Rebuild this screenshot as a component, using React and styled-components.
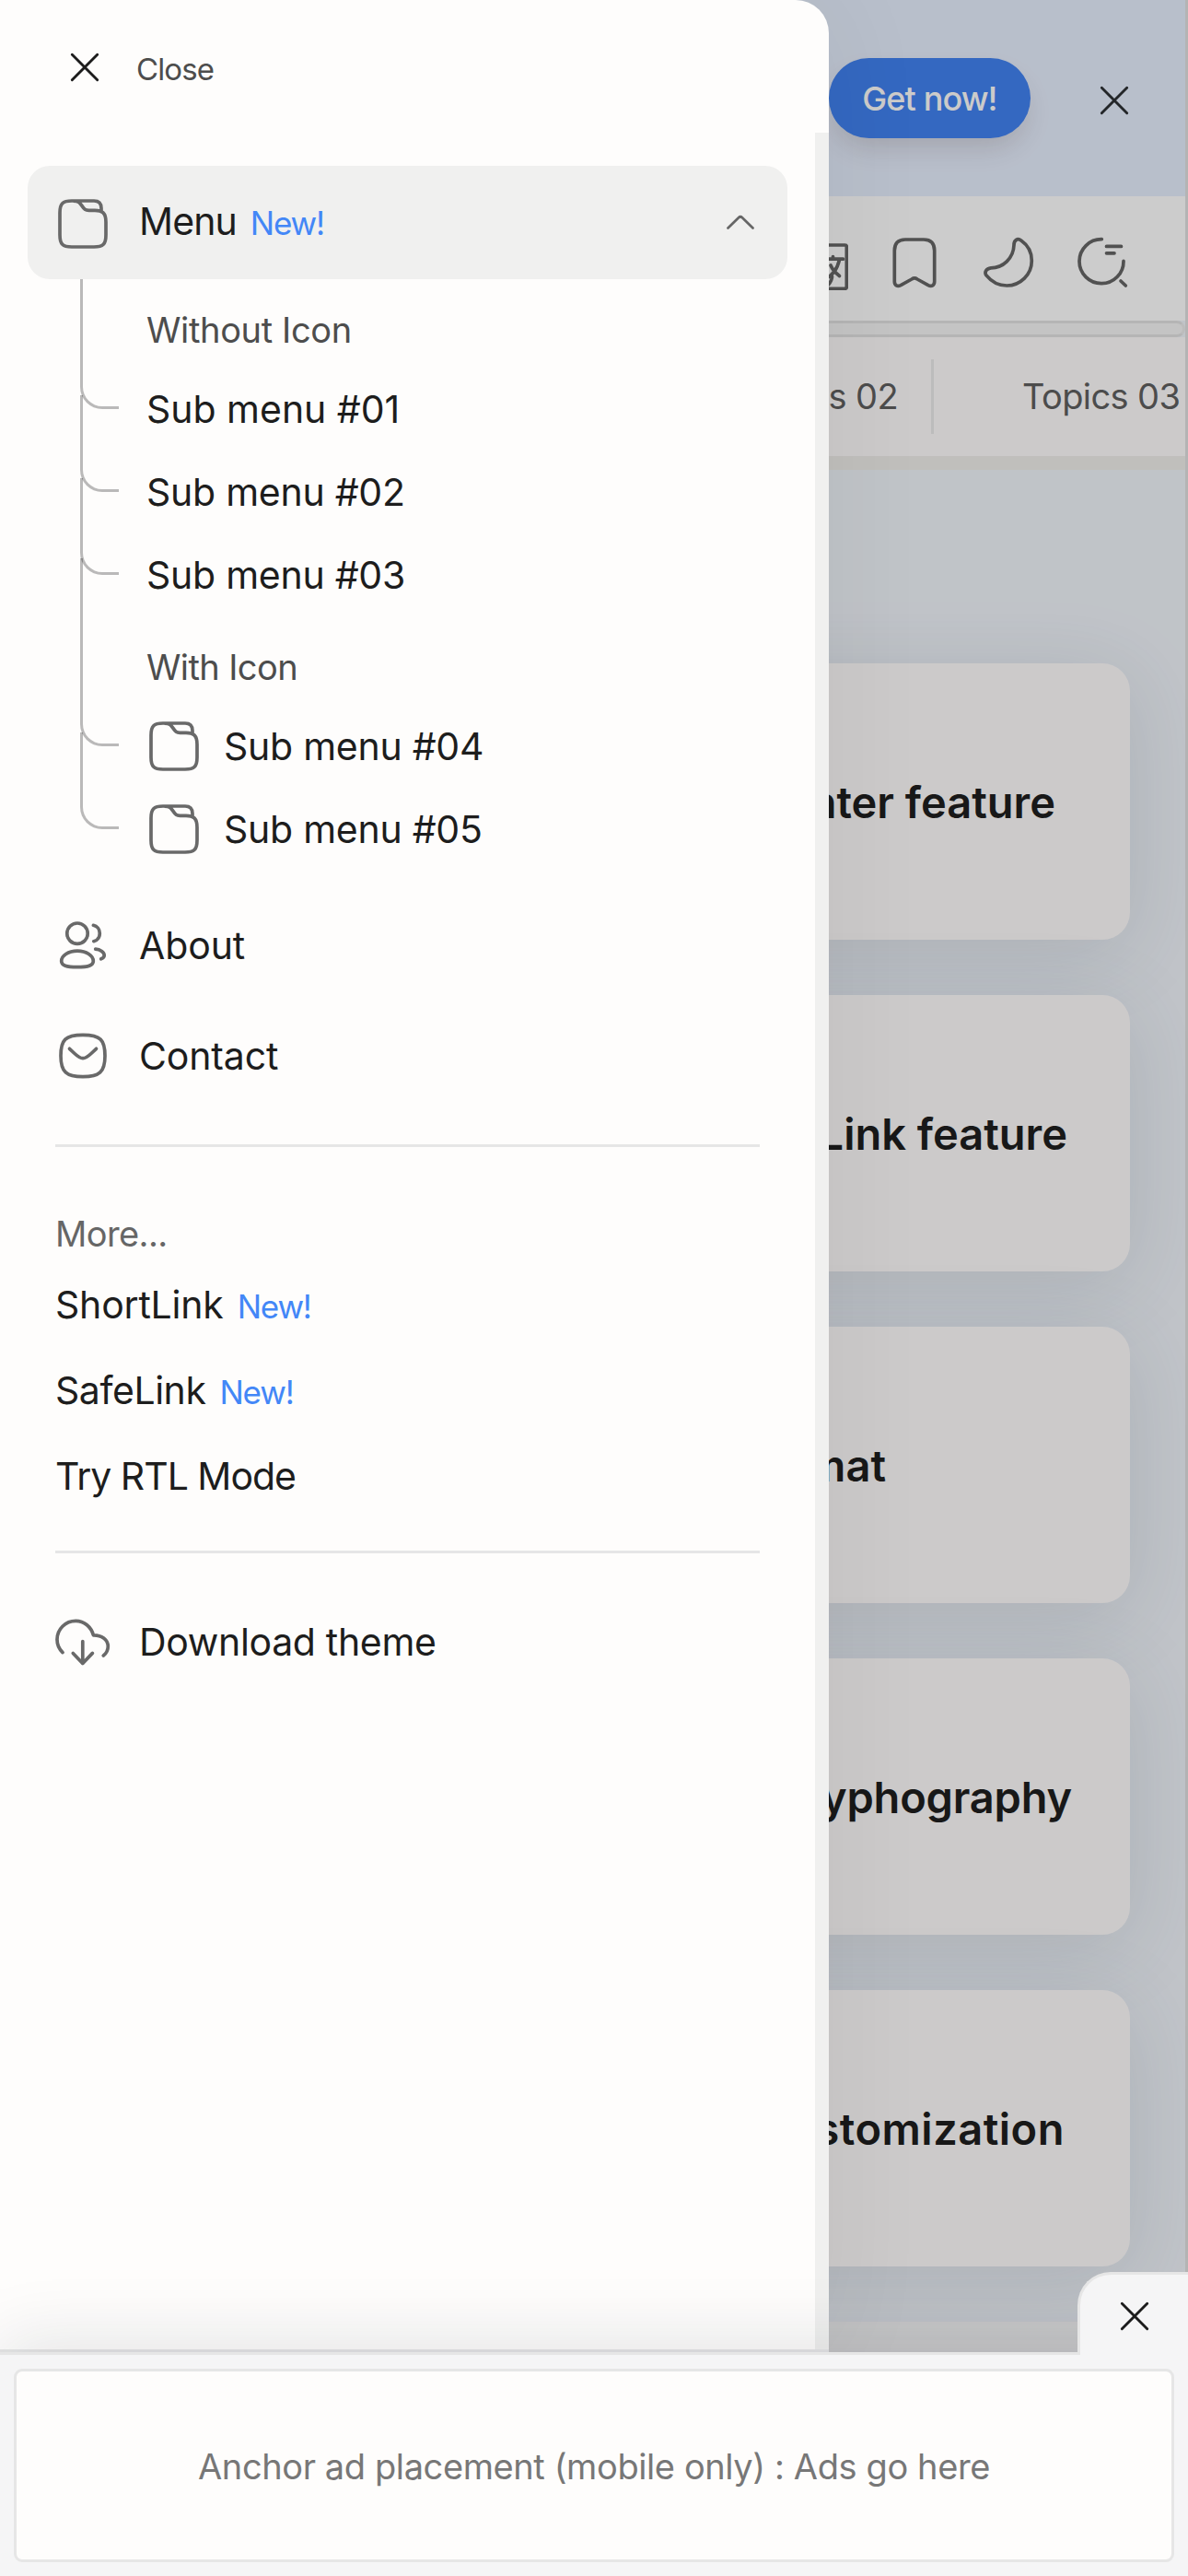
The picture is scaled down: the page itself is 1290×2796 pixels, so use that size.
import React from "react";
import styled, { createGlobalStyle, css } from "styled-components";

const GlobalStyle = createGlobalStyle`
  *, *::before { box-sizing: border-box; }
  body {
    margin: 0;
    font-family: "Inter", "Open Sans", sans-serif;
    color: #1d1d1d;
  }
  ul { list-style: none; margin: 0; padding: 0; }
  button { font: inherit; border: 0; padding: 0; background: none; color: inherit; }
`;

/* ---------- icons ---------- */

const Svg = styled.svg`
  display: block;
  flex: none;
  width: 60px;
  height: 60px;
  fill: none;
  stroke: ${(p) => p.$color || "#696969"};
  stroke-width: ${(p) => p.$weight || 3.7};
  stroke-linecap: round;
  stroke-linejoin: round;
`;

const Icon = ({ color, weight, children }) => (
  <Svg viewBox="0 0 60 60" $color={color} $weight={weight}>
    {children}
  </Svg>
);

const CloseIcon = ({ color = "#1c1c1c" }) => (
  <Icon color={color} weight={2.9}>
    <path d="M16.3 16.3L43.7 43.7M43.7 16.3L16.3 43.7" />
  </Icon>
);

const FolderIcon = () => (
  <Icon>
    <path d="M50 15.3V13C50 7.5 47.5 5 42 5H18C8 5 5 8 5 18V42C5 52 8 55 18 55H42C52 55 55 52 55 42V28C55 18 51 15.3 43 15.3H36.500C32.500 15.3 31.500 14 29.500 11.200C26.800 7.300 26 5.200 20 5.100" />
  </Icon>
);

const UsersIcon = () => (
  <Icon>
    <circle cx="24" cy="14.200" r="11.200" />
    <path d="M24 33.200C34 33.200 41.300 38.500 41.300 44.200C41.300 49 36 50.600 24 50.600C12 50.600 6.700 49 6.700 44.200C6.700 38.500 14 33.200 24 33.200Z" />
    <path d="M41.400 5.300C45.500 6.200 48.300 9.800 48.300 14C48.300 18.200 45.700 21.800 41.800 22.700" />
    <path d="M43.700 31.200C49 31.500 53.200 34.500 53.200 37.900C53.200 39.700 51.700 41 49.700 41.800" />
  </Icon>
);

const MailIcon = () => (
  <Icon>
    <path d="M30 4.300C49 4.300 54 9.500 54 27C54 44.500 48 49.700 30 49.700C12 49.700 6 44.500 6 27C6 9.500 11 4.300 30 4.300Z" />
    <path d="M15.500 19.300L21 24.500C25.500 28.700 27.500 29.700 30 29.700C32.500 29.700 34.500 28.700 39 24.500L44.500 19.300" />
  </Icon>
);

const CloudIcon = () => (
  <Icon>
    <path d="M8 38.600C4.200 35 2 30 2 24.600C2 13.300 11 4.400 22.300 4.400C31.500 4.400 39 11 41.400 19.800C50 19.600 57.300 24.500 57.300 32.100C57.300 36.200 55.500 39.600 52.300 42" />
    <path d="M29.800 26.500V50.500M19.300 39.400L29.800 50.500L40.400 39.400" />
  </Icon>
);

const BookmarkIcon = () => (
  <Icon color="#666">
    <path d="M8.300 17C8.300 9 12 5 20 5H40C48 5 51.700 9 51.700 17V50.500C51.700 54.800 48.500 56.400 45 54.600L33 48C31 46.600 29 46.600 27 48L15 54.600C11.500 56.400 8.300 54.800 8.300 50.500Z" />
  </Icon>
);

const MoonIcon = () => (
  <Icon color="#666">
    <path d="M36 11C36 5.300 40 3.200 43.800 6C51 11 55.300 19 55.300 28C55.300 43 43 55 28.300 55C18.500 55 11.500 50.500 6 43.800C3.500 40.500 6 36.300 11 35.800C24 35.800 35.500 25.500 36 11Z" />
  </Icon>
);

const SearchIcon = () => (
  <Icon color="#666">
    <path d="M29.300 4.700A24 24 0 1 0 53 28.400" />
    <path d="M50 50L55.300 55M34.500 12.400H50.500M34.500 19.800H43" />
  </Icon>
);

const TranslateIcon = () => (
  <Icon color="#666">
    <path d="M22 11H56.500Q58.300 11 58.300 13V56.300Q58.300 58.300 56.300 58.300H34L22 11Z" />
    <path d="M37 26.200H54.500M43.500 23.500V26M50.500 27C48 37 44 43 35 48M41 33C43 38 46 41 50.500 44.500M42.500 45C42.500 48.500 41 51 38.500 54" />
  </Icon>
);

const ChevronUp = styled.svg`
  width: 30px;
  height: 16px;
  margin-right: 36px;
  margin-top: -4px;
  fill: none;
  stroke: #666;
  stroke-width: 2.7;
  stroke-linecap: round;
  stroke-linejoin: round;
`;

/* ---------- page frame ---------- */

const Page = styled.div`
  position: relative;
  width: 1290px;
  height: 2796px;
  overflow: hidden;
  background: #f1f5fb;
`;

const Site = styled.div`
  display: flex;
  flex-direction: column;
  height: 2796px;
  border-right: 3px solid #e2e2e2;
`;

const Promo = styled.div`
  display: flex;
  align-items: center;
  justify-content: flex-end;
  height: 213px;
  padding-right: 47px;
  gap: 61px;
  background: #e7effe;
`;

const PromoButton = styled.button`
  width: 219px;
  height: 87px;
  border-radius: 44px;
  background: #4282f2;
  color: #fffefd;
  font-size: 36px;
  font-weight: 450;
  letter-spacing: -0.9px;
  box-shadow: 0 15px 30px -6px rgba(60, 30, 20, 0.16);
`;

const PromoClose = styled.button`
  margin-top: 4px;
`;

const Toolbar = styled.div`
  display: flex;
  justify-content: flex-end;
  height: 135px;
  padding: 42px 60px 0 0;
  gap: 42px;
  background: #fff;
`;

const Rail = styled.div`
  height: 18px;
  border: 3px solid #e3e3e3;
  border-left: 0;
  border-right-color: #ececec;
  border-radius: 0 9px 9px 0;
  background: #f5f5f5;
`;

const Topics = styled.div`
  display: flex;
  align-items: center;
  height: 129px;
  padding-left: 708px;
  overflow: hidden;
  background: #fffdfd;
`;

const Topic = styled.div`
  flex: none;
  display: flex;
  align-items: center;
  width: 306px;
  height: 81px;
  padding: 0 0 2px 96px;
  border-right: 3px solid #ececec;
  color: #5f5f5f;
  font-size: 38px;
  letter-spacing: -0.6px;
`;

const Strip = styled.div`
  height: 15px;
  background: #f1efec;
`;

const Cards = styled.div`
  display: flex;
  flex-direction: column;
  gap: 60px;
  height: 2010px;
  padding: 210px 60px 60px;
`;

const Card = styled.div`
  display: flex;
  align-items: center;
  justify-content: flex-end;
  flex: none;
  height: 300px;
  padding-top: 1px;
  padding-right: ${(p) => p.$inset}px;
  border-radius: 30px;
  background: #fffdfd;
  box-shadow: 0 15px 90px rgba(60, 75, 90, 0.14);
  color: #1e1e1e;
  font-size: 47px;
  font-weight: 600;
  letter-spacing: ${(p) => p.$track || 0}px;
  white-space: nowrap;
`;

const SiteFooter = styled.div`
  flex: 1;
  background: #f8f8f9;
`;

const Scrim = styled.div`
  position: absolute;
  inset: 0;
  background: rgba(0, 0, 0, 0.2);
`;

/* ---------- drawer ---------- */

const Drawer = styled.aside`
  position: absolute;
  top: 0;
  left: 0;
  width: 900px;
  height: 2553px;
  border-radius: 0 36px 0 0;
  border-bottom: 3px solid #e6e6e6;
  background: #fefdfc;
  box-shadow: 0 0 120px rgba(0, 0, 0, 0.06);
`;

const DrawerHead = styled.div`
  display: flex;
  align-items: center;
  height: 144px;
  padding: 10px 0 0 62px;
`;

const DrawerClose = styled.button`
  display: flex;
  align-items: center;
  gap: 26px;
  height: 60px;
  margin-top: -5px;
  color: #4d4d4d;
  font-size: 33px;
  letter-spacing: -0.9px;

  svg { margin-top: -4px; }
`;

const DrawerBody = styled.nav`
  height: 2406px;
  padding-top: 36px;
  border-right: 15px solid #f0f0ef;
`;

const Badge = styled.span`
  margin-left: ${(p) => p.$gap}px;
  color: #4387f7;
  font-size: 35px;
  letter-spacing: -1.2px;
`;

const Label = styled.span`
  flex: 1;
  margin-top: -6px;
  font-size: 41px;
  letter-spacing: ${(p) => p.$track || 0}px;
  white-space: nowrap;
`;

const rowBase = css`
  display: flex;
  align-items: center;
  gap: 31px;
`;

const ActiveRow = styled.div`
  ${rowBase}
  width: 825px;
  height: 123px;
  margin-left: 30px;
  padding: 3px 0 0 30px;
  border-radius: 24px;
  background: #f0f0ef;
`;

const NavRow = styled.div`
  ${rowBase}
  height: 120px;
  margin-top: ${(p) => p.$before || 0}px;
  padding-left: 60px;
`;

const SubHeading = styled.li`
  display: flex;
  align-items: center;
  height: 96px;
  padding: 14px 0 0 159px;
  color: #4d4d4d;
  font-size: 38px;
  letter-spacing: ${(p) => p.$track}px;
`;

const SubItem = styled.li`
  position: relative;
  display: flex;
  align-items: center;
  gap: 24px;
  height: 90px;
  padding-left: 159px;
  font-size: 41px;
  letter-spacing: ${(p) => p.$track || -0.26}px;

  &::before {
    content: "";
    position: absolute;
    left: 87px;
    width: 42px;
    top: -${(p) => p.$reach}px;
    bottom: 45px;
    border: solid rgba(0, 0, 0, 0.265);
    border-width: 0 0 3px 3px;
    border-bottom-left-radius: 24px;
  }
`;

const Divider = styled.hr`
  width: 765px;
  height: 3px;
  margin: ${(p) => p.$before}px 0 0 60px;
  border: 0;
  background: #e6e6e6;
`;

const SectionTitle = styled.div`
  display: flex;
  align-items: center;
  height: 125px;
  padding: 63px 0 0 60px;
  color: #666;
  font-size: 38px;
  letter-spacing: -0.6px;
`;

const LinkRow = styled.div`
  display: flex;
  align-items: baseline;
  height: 93px;
  line-height: 93px;
  padding-left: 60px;
  font-size: 41px;
  letter-spacing: ${(p) => p.$track}px;
`;

/* ---------- anchor ad ---------- */

const AdDock = styled.div`
  position: absolute;
  left: 0;
  bottom: 0;
  width: 1290px;
  height: 243px;
  padding: 15px;
  border-top: 3px solid #e6e6e6;
  background: #f5f5f6;
  box-shadow: 0 -12px 72px rgba(20, 25, 45, 0.11);
`;

const AdTab = styled.button`
  position: absolute;
  right: 0;
  top: -90px;
  display: flex;
  width: 120px;
  height: 90px;
  padding: 15px 0 0 29px;
  border: solid #e6e6e6;
  border-width: 3px 0 0 3px;
  border-radius: 36px 0 0 0;
  background: #f5f5f6;
`;

const AdBox = styled.div`
  display: flex;
  align-items: center;
  justify-content: center;
  height: 210px;
  padding-top: 2px;
  border: 3px solid #e6e6e6;
  border-radius: 9px;
  background: #fefdfc;
  color: #777;
  font-size: 38px;
  letter-spacing: -0.4px;
`;

const cards = [
  { title: "Counter feature", inset: 81, track: 0 },
  { title: "SafeLink feature", inset: 68, track: 0 },
  { title: "Format", inset: 265, track: 0 },
  { title: "Typhography", inset: 63, track: -0.2 },
  { title: "Customization", inset: 71, track: 0.5 },
];

export default function App() {
  return (
    <Page>
      <GlobalStyle />
      <Site>
        <Promo>
          <PromoButton>Get now!</PromoButton>
          <PromoClose>
            <CloseIcon color="#2c3034" />
          </PromoClose>
        </Promo>
        <Toolbar>
          <TranslateIcon />
          <BookmarkIcon />
          <MoonIcon />
          <SearchIcon />
        </Toolbar>
        <Rail />
        <Topics>
          <Topic>Topics 02</Topic>
          <Topic>Topics 03</Topic>
        </Topics>
        <Strip />
        <Cards>
          {cards.map((c) => (
            <Card key={c.title} $inset={c.inset} $track={c.track}>
              {c.title}
            </Card>
          ))}
        </Cards>
        <SiteFooter />
      </Site>

      <Scrim />

      <Drawer>
        <DrawerHead>
          <DrawerClose>
            <CloseIcon />
            Close
          </DrawerClose>
        </DrawerHead>
        <DrawerBody>
          <ActiveRow>
            <FolderIcon />
            <Label $track={-0.9}>
              Menu<Badge $gap={15}>New!</Badge>
            </Label>
            <ChevronUp viewBox="0 0 30 16">
              <path d="M1.500 14.500L13 3.200Q15 1.300 17 3.200L28.500 14.500" />
            </ChevronUp>
          </ActiveRow>
          <ul>
            <SubHeading $track={-0.35}>Without Icon</SubHeading>
            <SubItem $reach={96} $track={-0.02}>Sub menu #01</SubItem>
            <SubItem $reach={60}>Sub menu #02</SubItem>
            <SubItem $reach={60}>Sub menu #03</SubItem>
            <SubHeading $track={-0.6}>With Icon</SubHeading>
            <SubItem $reach={159}>
              <FolderIcon />
              Sub menu #04
            </SubItem>
            <SubItem $reach={60}>
              <FolderIcon />
              Sub menu #05
            </SubItem>
          </ul>
          <NavRow $before={24}>
            <UsersIcon />
            <Label $track={-0.1}>About</Label>
          </NavRow>
          <NavRow>
            <MailIcon />
            <Label $track={-0.14}>Contact</Label>
          </NavRow>
          <Divider $before={33} />
          <SectionTitle>More...</SectionTitle>
          <LinkRow $track={-0.2}>
            ShortLink<Badge $gap={15}>New!</Badge>
          </LinkRow>
          <LinkRow $track={-0.45}>
            SafeLink<Badge $gap={15}>New!</Badge>
          </LinkRow>
          <LinkRow $track={-1}>Try RTL Mode</LinkRow>
          <Divider $before={34} />
          <NavRow $before={39}>
            <CloudIcon />
            <Label $track={-0.33}>Download theme</Label>
          </NavRow>
        </DrawerBody>
      </Drawer>

      <AdDock>
        <AdBox>Anchor ad placement (mobile only) : Ads go here</AdBox>
        <AdTab>
          <CloseIcon />
        </AdTab>
      </AdDock>
    </Page>
  );
}
